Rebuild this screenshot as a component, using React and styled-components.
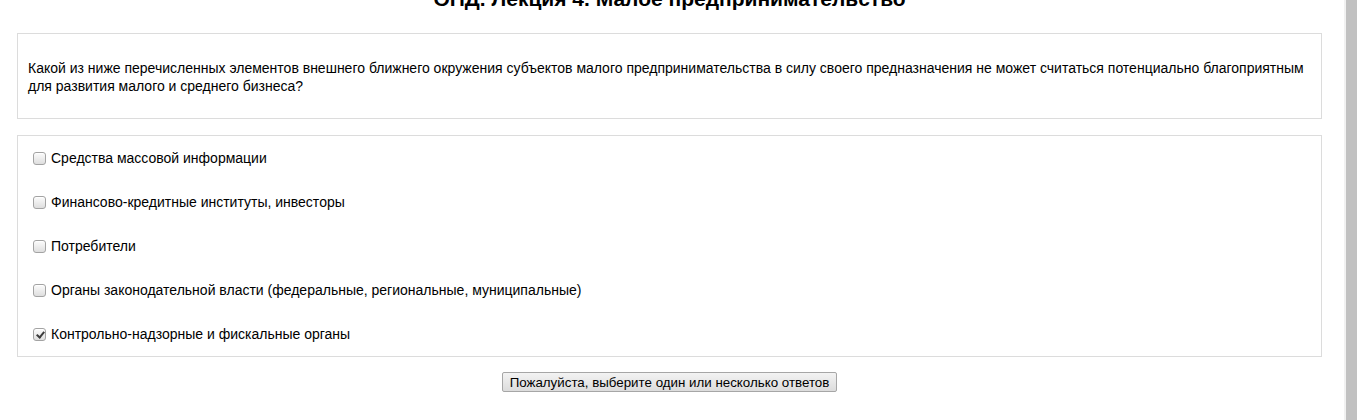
import React, { useState } from 'react'
import styled, { createGlobalStyle } from 'styled-components'

const GlobalStyle = createGlobalStyle`
  html, body {
    margin: 0;
    padding: 0;
    background: #fff;
    overflow: hidden;
  }
  body {
    font: 14px 'Liberation Sans', Arial, sans-serif;
    color: #000;
  }
`

const Page = styled.div`
  display: flex;
  flex-direction: row;
  height: 420px;
  overflow: hidden;
`

const Main = styled.main`
  flex: 1;
  padding: 0 22px 0 17px;
  margin-top: -13px;
`

const ScrollTrack = styled.div`
  width: 11px;
  padding-left: 2px;
  background: #f1f1f1;
  display: flex;
`

const ScrollThumb = styled.div`
  flex: 1;
  background: #c1c1c1;
`

const Title = styled.h2`
  margin: 0 0 22px;
  font-size: 21px;
  line-height: 24px;
  font-weight: bold;
  text-align: center;
`

const Panel = styled.section`
  border: 1px solid #dcdcdc;
  padding: ${p => p.$pad || '0'};
  margin-bottom: ${p => p.$gap || '0'};
`

const Question = styled.p`
  margin: 0;
  line-height: 18px;
`

const Option = styled.label`
  display: flex;
  align-items: center;
  height: 44px;
  padding-left: 15px;
  cursor: pointer;
`

const Check = styled.input.attrs({ type: 'checkbox' })`
  appearance: none;
  position: relative;
  width: 13px;
  height: 13px;
  margin: 0 5px 0 0;
  border: 1px solid #a3a3a3;
  border-radius: 3px;
  background: linear-gradient(#fcfcfc, #dedede);
  box-shadow: inset 0 1px 0 #fff;
  &:checked::after {
    content: '';
    position: absolute;
    left: 3.5px;
    top: 1px;
    width: 3px;
    height: 6px;
    border: solid #3c3c3c;
    border-width: 0 2px 2px 0;
    transform: rotate(40deg);
  }
`

const Actions = styled.div`
  display: flex;
  justify-content: center;
  padding-top: 15px;
`

const Button = styled.button`
  font: 13.33px 'Liberation Sans', Arial, sans-serif;
  color: #000;
  height: 20px;
  padding: 0 7px;
  border: 1px solid #a6a6a6;
  border-radius: 2px;
  background: linear-gradient(#f3f3f3, #dcdcdc);
  cursor: pointer;
`

const options = [
  'Средства массовой информации',
  'Финансово-кредитные институты, инвесторы',
  'Потребители',
  'Органы законодательной власти (федеральные, региональные, муниципальные)',
  'Контрольно-надзорные и фискальные органы'
]

const App = () => {
  const [checked, setChecked] = useState([false, false, false, false, true])

  const toggle = i => {
    setChecked(checked.map((c, j) => (j === i ? !c : c)))
  }

  return (
    <>
      <GlobalStyle />
      <Page>
        <Main>
          <Title>ОПД. Лекция 4. Малое предпринимательство</Title>
          <Panel $pad='25px 10px 23px' $gap='16px'>
            <Question>
              Какой из ниже перечисленных элементов внешнего ближнего окружения субъектов малого предпринимательства в силу своего предназначения не может считаться потенциально благоприятным для развития малого и среднего бизнеса?
            </Question>
          </Panel>
          <Panel>
            {options.map((text, i) => (
              <Option key={i}>
                <Check checked={checked[i]} onChange={() => toggle(i)} />
                {text}
              </Option>
            ))}
          </Panel>
          <Actions>
            <Button>Пожалуйста, выберите один или несколько ответов</Button>
          </Actions>
        </Main>
        <ScrollTrack><ScrollThumb /></ScrollTrack>
      </Page>
    </>
  )
}

export default App
